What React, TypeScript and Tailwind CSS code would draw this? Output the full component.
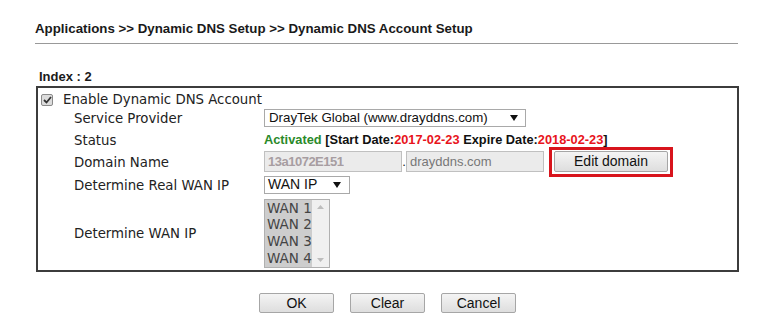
import React from "react";

const arial = { fontFamily: '"Liberation Sans", Arial, sans-serif' };
const verdana = { fontFamily: '"DejaVu Sans", Verdana, sans-serif' };

function Caret() {
  return (
    <svg width="8" height="6" viewBox="0 0 8 6" className="shrink-0">
      <path d="M0 0 L8 0 L4 6 Z" fill="#111" />
    </svg>
  );
}

function Btn({ label, className = "" }: { label: string; className?: string }) {
  return (
    <div
      className={`flex h-[20px] items-center justify-center rounded-[2px] border border-[#a6a6a6] bg-gradient-to-b from-[#f4f4f4] to-[#dedede] text-[14px] text-[#111] ${className}`}
      style={arial}
    >
      {label}
    </div>
  );
}

export default function App() {
  return (
    <div className="h-[323px] w-[774px] bg-white" style={arial}>
      <div className="pl-[35px] pt-[21px]">
        <div className="w-[703px] border-b border-[#999] pb-[6px] text-[13.3px] font-bold leading-[16px] text-[#1a1a1a]">
          Applications &gt;&gt; Dynamic DNS Setup &gt;&gt; Dynamic DNS Account Setup
        </div>
        <div className="pl-[4px] pt-[25px] text-[13px] font-bold leading-[16px] text-[#1a1a1a]">
          Index : 2
        </div>
        <div className="ml-[1px] mt-[1px] w-[703px] border-2 border-[#3c3c3c] text-[13.3px] text-[#222]" style={verdana}>
          <div className="flex h-[19px] items-center pl-[3px] pt-[5px]">
            <div className="flex h-[12px] w-[12px] items-center justify-center rounded-[2px] border border-[#8a8a8a] bg-[#dcdcdc]">
              <svg width="9" height="8" viewBox="0 0 9 8">
                <path d="M1 4 L3.5 6.5 L8 1" stroke="#333" strokeWidth="1.8" fill="none" />
              </svg>
            </div>
            <span className="pl-[10px]">Enable Dynamic DNS Account</span>
          </div>
          <div className="flex h-[22px] items-center">
            <div className="w-[226px] pl-[36px] pt-[2px]">Service Provider</div>
            <div
              className="flex h-[18px] w-[262px] items-center justify-between border border-[#a9a9a9] bg-white pl-[4px] pr-[7px] text-[13.3px] text-[#111]"
              style={arial}
            >
              <span>DrayTek Global (www.drayddns.com)</span>
              <Caret />
            </div>
          </div>
          <div className="flex h-[21px] items-center">
            <div className="w-[226px] pl-[36px] pt-[2px]">Status</div>
            <div className="text-[12.8px] font-bold text-[#111]" style={arial}>
              <span className="text-[#2a8a2a]">Activated</span> [Start Date:
              <span className="text-[#e8141c]">2017-02-23</span> Expire Date:
              <span className="text-[#e8141c]">2018-02-23</span>]
            </div>
          </div>
          <div className="flex h-[23px] items-center">
            <div className="w-[226px] pl-[36px] pt-[2px]">Domain Name</div>
            <div className="flex items-center text-[13px]" style={arial}>
              <div className="flex h-[21px] w-[138px] items-center border border-[#c0c0c0] bg-[#ebebeb] pl-[3px] tracking-[-0.5px]">
                <span className="font-bold text-[#7a6a70] opacity-60">13a1072E151</span>
              </div>
              <span className="w-[4px] text-center text-[#222]">.</span>
              <div className="flex h-[21px] w-[138px] items-center border border-[#c0c0c0] bg-[#ebebeb] pl-[3px] text-[#777]">
                drayddns.com
              </div>
              <div className="ml-[5px] flex h-[30px] w-[124px] items-center justify-center border-[3px] border-[#d8141c]">
                <Btn label="Edit domain" className="h-[21px] w-[114px]" />
              </div>
            </div>
          </div>
          <div className="flex h-[23px] items-center">
            <div className="w-[226px] pl-[36px] pt-[2px]">Determine Real WAN IP</div>
            <div
              className="flex h-[18px] w-[86px] items-center justify-between border border-[#a9a9a9] bg-white pl-[3px] pr-[8px] text-[14px] text-[#111]"
              style={arial}
            >
              <span>WAN IP</span>
              <Caret />
            </div>
          </div>
          <div className="flex h-[74px] items-center">
            <div className="w-[226px] pl-[36px] pt-[2px]">Determine WAN IP</div>
            <div className="flex h-[69px] w-[66px] border border-[#b0b0b0]" style={verdana}>
              <div className="flex w-[47px] flex-col bg-[#cdcdcd] pl-[2px] text-[13.5px] leading-[16.8px] text-[#444]">
                <span>WAN 1</span>
                <span>WAN 2</span>
                <span>WAN 3</span>
                <span>WAN 4</span>
              </div>
              <div className="flex flex-1 flex-col items-center justify-between bg-[#f0f0f0] py-[5px]">
                <svg width="7" height="4" viewBox="0 0 7 4">
                  <path d="M0 4 L7 4 L3.5 0 Z" fill="#bdbdbd" />
                </svg>
                <svg width="7" height="4" viewBox="0 0 7 4">
                  <path d="M0 0 L7 0 L3.5 4 Z" fill="#bdbdbd" />
                </svg>
              </div>
            </div>
          </div>
        </div>
        <div className="flex gap-[16px] pl-[224px] pt-[21px]">
          <Btn label="OK" className="w-[75px]" />
          <Btn label="Clear" className="w-[75px]" />
          <Btn label="Cancel" className="w-[75px]" />
        </div>
      </div>
    </div>
  );
}
